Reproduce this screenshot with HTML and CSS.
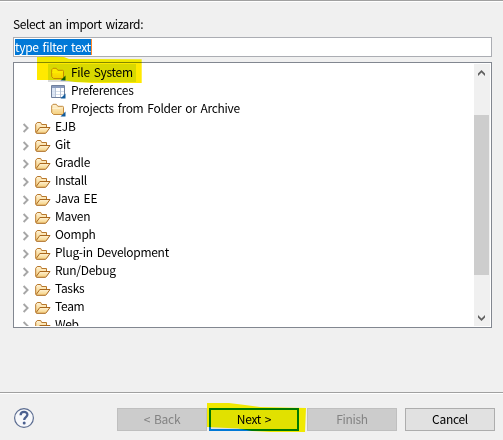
FILE: index.html
```
<!DOCTYPE html>
<html lang="en">
<head>
<meta charset="utf-8">
<title>Import</title>
<link rel="stylesheet" href="styles.css">
</head>
<body>
<svg width="0" height="0" class="defs">
  <defs>
    <linearGradient id="gold" x1="0" y1="0" x2="0" y2="1"><stop offset="0" stop-color="#fff3d6"/><stop offset="1" stop-color="#f5cf7c"/></linearGradient>
    <symbol id="chev" viewBox="0 0 8 10"><path d="M1.6 1l4 4-4 4" fill="none" stroke="#a6a6a6" stroke-width="1.9"/></symbol>
    <symbol id="open" viewBox="0 0 16 14"><path d="M.7 11.5V3.3L2.2 1.5H5.7L6.7 3.5H11.5V6" fill="url(#gold)" stroke="#b8782c"/><path d="M1 11.8L4.8 6.5H15L11.2 11.8Q10.8 12.3 10 12.3H1.6Z" fill="url(#gold)" stroke="#a9671d"/></symbol>
    <symbol id="wiz" viewBox="0 0 16 14"><path d="M.7 9.6V2.8L2 1.3H5.3L6.8 3.3H11.5Q12.5 3.3 12.5 4.3V10.4Q12.5 11.5 11.5 11.5H2.5Z" fill="url(#gold)" stroke="#c28a3e"/><path d="M1.2 5.3H9.5" stroke="#fff3d6"/><path d="M14.5 8.5V13.5H9.5Z" fill="#125b9c"/></symbol>
    <symbol id="pref" viewBox="0 0 16 14"><path d="M.5 .5h13v12H.5z" fill="#fff" stroke="#70809d"/><path d="M1 1h12v2H1z" fill="#8a9bbd"/><path d="M1 3h3v9H1z" fill="#dce6f5"/><path d="M1 6.5h12M1 9.5h12" stroke="#d5e0ee"/><path d="M4.5 3v9M9.5 3v9" stroke="#b4c0d4"/><path d="M14.5 8.5V13.5H9.5Z" fill="#125b9c"/></symbol>
  </defs>
</svg>
<main class="dialog">
  <section class="content">
    <div class="label"><span>Select an import wizard:</span></div>
    <div class="filter"><span class="sel">type filter text</span></div>
    <div class="tree">
      <div class="rows">
        <div class="row child"><svg class="ic"><use href="#wiz"/></svg><span>File System</span></div>
        <div class="row child"><svg class="ic"><use href="#pref"/></svg><span>Preferences</span></div>
        <div class="row child"><svg class="ic"><use href="#wiz"/></svg><span>Projects from Folder or Archive</span></div>
        <div class="row"><svg class="ch"><use href="#chev"/></svg><svg class="ic"><use href="#open"/></svg><span>EJB</span></div>
        <div class="row"><svg class="ch"><use href="#chev"/></svg><svg class="ic"><use href="#open"/></svg><span>Git</span></div>
        <div class="row"><svg class="ch"><use href="#chev"/></svg><svg class="ic"><use href="#open"/></svg><span>Gradle</span></div>
        <div class="row"><svg class="ch"><use href="#chev"/></svg><svg class="ic"><use href="#open"/></svg><span>Install</span></div>
        <div class="row"><svg class="ch"><use href="#chev"/></svg><svg class="ic"><use href="#open"/></svg><span>Java EE</span></div>
        <div class="row"><svg class="ch"><use href="#chev"/></svg><svg class="ic"><use href="#open"/></svg><span>Maven</span></div>
        <div class="row"><svg class="ch"><use href="#chev"/></svg><svg class="ic"><use href="#open"/></svg><span>Oomph</span></div>
        <div class="row"><svg class="ch"><use href="#chev"/></svg><svg class="ic"><use href="#open"/></svg><span>Plug-in Development</span></div>
        <div class="row"><svg class="ch"><use href="#chev"/></svg><svg class="ic"><use href="#open"/></svg><span>Run/Debug</span></div>
        <div class="row"><svg class="ch"><use href="#chev"/></svg><svg class="ic"><use href="#open"/></svg><span>Tasks</span></div>
        <div class="row"><svg class="ch"><use href="#chev"/></svg><svg class="ic"><use href="#open"/></svg><span>Team</span></div>
        <div class="row"><svg class="ch"><use href="#chev"/></svg><svg class="ic"><use href="#open"/></svg><span>Web</span></div>
      </div>
      <div class="scroll">
        <svg class="arrow" viewBox="0 0 16 17"><path d="M4 12V9.5L7.5 6L11 9.5V12L7.5 8.5Z" fill="#606060"/></svg>
        <div class="thumb"></div>
        <svg class="arrow down" viewBox="0 0 16 17"><path d="M4 6V8.5L7.5 12L11 8.5V6L7.5 9.5Z" fill="#606060"/></svg>
      </div>
    </div>
  </section>
  <footer class="bar">
    <svg class="help" viewBox="0 0 22 22"><circle cx="11" cy="10" r="9.4" fill="#f7f8fb" stroke="#5c6d91" stroke-width="1.2"/><path d="M7.6 7.3C7.6 2.9 14.5 3 14.4 6.8C14.3 9 11.2 9.2 11.2 12" fill="none" stroke="#4b6090" stroke-width="2.3"/><circle cx="11.2" cy="15.1" r="1.5" fill="#4b6090"/></svg>
    <div class="btn off">&lt; Back</div>
    <div class="btn next">Next &gt;</div>
    <div class="btn off finish">Finish</div>
    <div class="btn cancel">Cancel</div>
  </footer>
  <svg class="marker" viewBox="0 0 503 440"><path d="M37 57L52 56.5L64 57L69 59L141.7 59.3V83H92L75 82L62 80H37Z"/><path d="M207 403H229L245 405L260 407L306 408L305 432H270L252 431L238 428.5L207 427Z"/></svg>
</main>
</body>
</html>
```
FILE: styles.css
```
* { box-sizing: border-box; }
body { margin: 0; background: #f0f0f0; font: 12px/18px "Noto Sans CJK KR", "Noto Sans", sans-serif; letter-spacing: -.3px; word-spacing: 1.5px; color: #000; }
.defs { position: absolute; }
.dialog { position: relative; width: 503px; height: 440px; overflow: hidden; display: flex; flex-direction: column; border-top: 1px solid #a0a0a0; box-shadow: inset 0 1px #fff; white-space: nowrap; }
.content { height: 391px; padding: 14px 11px 0 13px; }
.label { height: 22px; letter-spacing: -.4px; }
.filter { height: 20px; border: 1px solid #abadb3; background: #fff; padding: 1px; line-height: 15px; }
.sel { display: inline-block; height: 16px; background: #0078d7; color: #fff; border-right: 1px solid #ff8728; }
.tree { height: 266px; margin-top: 5px; border: 1px solid #828790; background: #fff; padding: 1px 1px 1px 8px; display: flex; }
.rows { flex: 1; overflow: hidden; }
.row { height: 18px; display: flex; align-items: center; line-height: 16px; }
.row span { margin: -2px 0 0 4px; }
.child { padding-left: 29px; }
.ch { width: 8px; height: 10px; margin: 2px 5px 0 0; flex: none; }
.ic { width: 16px; height: 14px; flex: none; margin-top: 2px; }
.child:first-child { width: 114px; background: linear-gradient(90deg, transparent 26px, #d9d9d9 26px); }
.scroll { width: 16px; background: #f0f0f0; display: flex; flex-direction: column; }
.arrow { width: 16px; height: 17px; flex: none; }
.down { margin-top: auto; }
.thumb { width: 15px; height: 160px; margin-top: 34px; background: #cdcdcd; }
.bar { height: 48px; border-top: 1px solid #a0a0a0; box-shadow: inset 0 1px #fff; padding: 15px 8px 0 13px; display: flex; align-items: flex-start; }
.help { width: 22px; height: 22px; margin-right: 82px; flex: none; }
.btn { width: 90px; height: 23px; border: 1px solid #adadad; background: #e1e1e1; text-align: center; line-height: 20px; flex: none; }
.off { background: #ccc; border-color: #bfbfbf; color: #838383; }
.next { margin-left: 2px; border: 2px solid #0078d7; line-height: 18px; }
.finish, .cancel { margin-left: 8px; }
.marker { position: absolute; left: 0; top: -1px; width: 503px; height: 440px; mix-blend-mode: darken; fill: #ffe900; pointer-events: none; }
```
